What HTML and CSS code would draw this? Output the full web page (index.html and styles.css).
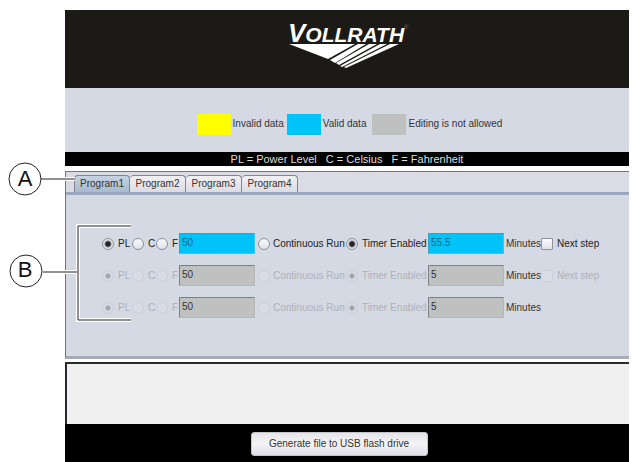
FILE: index.html
```html
<!DOCTYPE html>
<html lang="en">
<head>
<meta charset="utf-8">
<title>Vollrath program editor</title>
<link rel="stylesheet" href="styles.css">
</head>
<body>
<main class="app">
  <header class="brand">
    <svg class="logo" viewBox="0 0 130 50" role="img" aria-label="Vollrath">
      <text class="wordmark" x="6" y="22"><tspan class="initial">V</tspan><tspan class="rest">OLLRATH</tspan></text>
      <text class="mark" x="122" y="9">®</text>
      <g fill="#fff">
        <path d="M7 24H73L46 39Z"/>
        <path d="M76 24H84L53 43L48 40Z"/>
        <path d="M87 24H95L57 45L54 43Z"/>
        <path d="M98 24H105L60 47L58 46Z"/>
        <path d="M108 24H117L64 48L62 47Z"/>
      </g>
    </svg>
  </header>

  <section class="legend">
    <span class="key"><i class="swatch invalid"></i>Invalid data</span>
    <span class="key"><i class="swatch valid"></i>Valid data</span>
    <span class="key locked-key"><i class="swatch locked"></i>Editing is not allowed</span>
  </section>
  <p class="units">PL = Power Level&nbsp;&nbsp; C = Celsius&nbsp;&nbsp; F = Fahrenheit</p>

  <section class="programs">
    <nav class="tabs" role="tablist">
      <button class="tab active" role="tab" aria-selected="true">Program1</button>
      <button class="tab" role="tab">Program2</button>
      <button class="tab" role="tab">Program3</button>
      <button class="tab" role="tab">Program4</button>
    </nav>
    <form class="steps">
      <div class="step">
        <label class="option"><input type="radio" name="unit1" checked>PL</label>
        <label class="option"><input type="radio" name="unit1">C</label>
        <label class="option"><input type="radio" name="unit1">F</label>
        <input class="field" type="text" value="50" aria-label="Level">
        <label class="option run"><input type="radio" name="mode1">Continuous Run</label>
        <label class="option"><input type="radio" name="mode1" checked>Timer Enabled</label>
        <input class="field" type="text" value="55.5" id="time1">
        <label class="minutes" for="time1">Minutes</label>
        <label class="option"><input type="checkbox">Next step</label>
      </div>
      <div class="step">
        <label class="option off"><input type="radio" name="unit2" checked disabled>PL</label>
        <label class="option off"><input type="radio" name="unit2" disabled>C</label>
        <label class="option off"><input type="radio" name="unit2" disabled>F</label>
        <input class="field" type="text" value="50" aria-label="Level" disabled>
        <label class="option run off"><input type="radio" name="mode2" disabled>Continuous Run</label>
        <label class="option off"><input type="radio" name="mode2" checked disabled>Timer Enabled</label>
        <input class="field" type="text" value="5" id="time2" disabled>
        <label class="minutes" for="time2">Minutes</label>
        <label class="option off"><input type="checkbox" disabled>Next step</label>
      </div>
      <div class="step">
        <label class="option off"><input type="radio" name="unit3" checked disabled>PL</label>
        <label class="option off"><input type="radio" name="unit3" disabled>C</label>
        <label class="option off"><input type="radio" name="unit3" disabled>F</label>
        <input class="field" type="text" value="50" aria-label="Level" disabled>
        <label class="option run off"><input type="radio" name="mode3" disabled>Continuous Run</label>
        <label class="option off"><input type="radio" name="mode3" checked disabled>Timer Enabled</label>
        <input class="field" type="text" value="5" id="time3" disabled>
        <label class="minutes" for="time3">Minutes</label>
      </div>
    </form>
  </section>

  <section class="messages"></section>
  <footer class="actions"><button class="generate">Generate file to USB flash drive</button></footer>
</main>

<svg class="callouts" width="140" height="340" viewBox="0 0 140 340">
  <path class="halo" d="M65 179H75M65 272H77M131 226H78V320H131"/>
  <g class="lines">
    <path d="M41 179H75M43 272H77M131 226H78V320H131"/>
    <circle cx="25" cy="179" r="16"/>
    <circle cx="26" cy="271" r="16"/>
  </g>
  <text x="25" y="186">A</text>
  <text x="25" y="277">B</text>
</svg>
</body>
</html>
```
FILE: styles.css
```css
* { box-sizing: border-box; }

body {
  margin: 0;
  background: #fff;
  color: #333;
  font: 10px/12px "Liberation Sans", Arial, sans-serif;
}

button, input { font: inherit; color: inherit; }

.app {
  display: flex;
  flex-direction: column;
  min-height: 100vh;
  padding: 10px 3px 0 65px;
}

.brand {
  display: flex;
  justify-content: center;
  height: 78px;
  padding-top: 10px;
  background: #1c1a17;
}

.logo { width: 130px; height: 50px; overflow: visible; }
.wordmark {
  fill: #fff;
  font-family: "Liberation Sans", Arial, sans-serif;
  font-weight: bold;
  font-style: italic;
}
.initial { font-size: 26px; }
.rest { font-size: 21px; }
.mark { font-size: 6px; fill: #777; }

.legend {
  display: flex;
  justify-content: center;
  align-items: center;
  gap: 3px;
  height: 64px;
  padding: 14px 0 6px 5px;
  background: #d5d9e3;
}
.key { display: flex; align-items: center; gap: 2px; }
.locked-key { margin-left: 3px; }
.swatch { width: 34px; height: 21px; }
.invalid { background: #ff0; }
.valid { background: #00c4f8; }
.locked { background: #bfc1c1; }

.units {
  margin: 0;
  background: #000;
  color: #ddd;
  font-size: 11px;
  line-height: 14px;
  text-align: center;
}

.programs {
  margin-top: 5px;
  border: solid #6f747f;
  border-width: 1px 0 0 1px;
  border-bottom: 3px solid #a5aab6;
  background: #d5d9e3;
}

.tabs {
  display: flex;
  padding: 3px 0 0 8px;
  border-bottom: 3px solid #98a7bd;
  background: #dadbe4;
}
.tab {
  width: 56px;
  height: 17px;
  padding: 0;
  border: 1px solid #80858f;
  border-bottom: 0;
  border-left-width: 0;
  border-radius: 4px 4px 0 0;
  background: linear-gradient(#f0f0f4, #dcdde4);
  text-align: center;
}
.tab.active {
  border-left-width: 1px;
  background: linear-gradient(#c5d2e2, #a8bad0);
}

.steps {
  display: grid;
  grid-template-columns: 30px 24px 23px 76px 91px 82px 76px 37px 57px;
  justify-content: center;
  row-gap: 11px;
  padding: 38px 0 38px 5px;
}
.step { display: contents; }
.option {
  display: flex;
  align-items: center;
  gap: 4px;
  white-space: nowrap;
  color: #222;
}
.run { padding-left: 3px; gap: 3px; }
.off { color: #adb1ba; }
.minutes { align-self: center; padding-left: 2px; }

.field {
  width: 100%;
  min-width: 0;
  height: 21px;
  padding: 0 2px 2px;
  border: 1px solid #4fb3d2;
  border-color: #3d9fbe #35c8f0 #35c8f0 #3d9fbe;
  border-radius: 0;
  background: #00c4f8;
  color: #17637c;
}
.field:disabled {
  border-color: #7e8084 #b4b6b8 #b4b6b8 #7e8084;
  background: #bfc1c1;
  color: #333;
}

[type="radio"], [type="checkbox"] {
  appearance: none;
  flex: none;
  width: 12px;
  height: 12px;
  margin: 0;
  border: 1px solid #8d929c;
  background: linear-gradient(#fafafc, #dfe1e8);
}
[type="radio"] { border-radius: 50%; }
[type="checkbox"] { border-radius: 1px; }
[type="radio"]:checked {
  background: radial-gradient(circle, #222 0 2px, #dfe3ea 4px);
}
[type="radio"]:disabled, [type="checkbox"]:disabled {
  border-color: #cbcfd9;
  background: #d9dce5;
}
[type="radio"]:checked:disabled {
  background: radial-gradient(circle, #a1a5ae 0 2px, #d7dae3 3px);
}

.messages {
  height: 62px;
  margin-top: 3px;
  border: solid #2b2b2f;
  border-width: 2px 0 0 2px;
  background: #f0f0f0;
}

.actions {
  display: flex;
  flex: 1;
  justify-content: center;
  align-items: flex-start;
  padding: 8px 16px 6px 0;
  background: #000;
}
.generate {
  width: 177px;
  height: 24px;
  padding: 0;
  border: 1px solid #c3c4ca;
  border-radius: 3px;
  background: linear-gradient(#e4e5ea, #f4f4f6 50%, #dfe0e7);
}

.callouts { position: absolute; top: 0; left: 0; pointer-events: none; }
.halo { fill: none; stroke: #fff; stroke-width: 4px; }
.lines { fill: none; stroke: #222; stroke-width: 1px; }
.lines circle { fill: #fff; }
.callouts text {
  fill: #111;
  font-family: "Liberation Sans Narrow", "Liberation Sans", sans-serif;
  font-size: 22px;
  text-anchor: middle;
}
```
